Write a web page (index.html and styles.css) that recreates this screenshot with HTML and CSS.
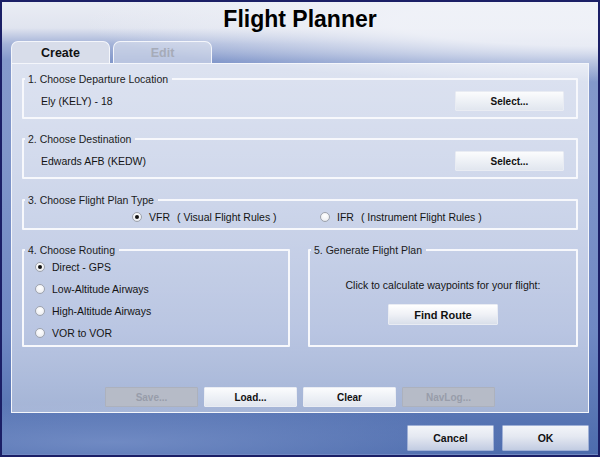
FILE: index.html
```html
<!DOCTYPE html>
<html lang="en">
<head>
  <meta charset="UTF-8">
  <meta name="viewport" content="width=device-width, initial-scale=1.0">
  <title>Flight Planner</title>
  <link rel="stylesheet" href="styles.css">
</head>
<body>
  <div class="window">
    <h1 class="title">Flight Planner</h1>
    <div class="tabs">
      <div class="tab active">Create</div>
      <div class="tab disabled">Edit</div>
    </div>
    <div class="panel">
      <fieldset class="group">
        <legend>1. Choose Departure Location</legend>
        <div class="row">
          <span class="value">Ely (KELY) - 18</span>
          <button class="btn">Select...</button>
        </div>
      </fieldset>
      <fieldset class="group">
        <legend>2. Choose Destination</legend>
        <div class="row">
          <span class="value">Edwards AFB (KEDW)</span>
          <button class="btn">Select...</button>
        </div>
      </fieldset>
      <fieldset class="group type">
        <legend>3. Choose Flight Plan Type</legend>
        <div class="types">
          <label class="radio checked"><span class="dot"></span>VFR<span class="hint">( Visual Flight Rules )</span></label>
          <label class="radio"><span class="dot"></span>IFR<span class="hint">( Instrument Flight Rules )</span></label>
        </div>
      </fieldset>
      <div class="split">
        <fieldset class="group routing">
          <legend>4. Choose Routing</legend>
          <label class="radio checked"><span class="dot"></span>Direct - GPS</label>
          <label class="radio"><span class="dot"></span>Low-Altitude Airways</label>
          <label class="radio"><span class="dot"></span>High-Altitude Airways</label>
          <label class="radio"><span class="dot"></span>VOR to VOR</label>
        </fieldset>
        <fieldset class="group generate">
          <legend>5. Generate Flight Plan</legend>
          <p>Click to calculate waypoints for your flight:</p>
          <button class="btn find">Find Route</button>
        </fieldset>
      </div>
      <div class="actions">
        <button class="btn wide" disabled>Save...</button>
        <button class="btn wide">Load...</button>
        <button class="btn wide">Clear</button>
        <button class="btn wide" disabled>NavLog...</button>
      </div>
    </div>
    <div class="footer">
      <button class="btn big">Cancel</button>
      <button class="btn big">OK</button>
    </div>
  </div>
</body>
</html>
```

FILE: styles.css
```css
html, body {
  margin: 0;
  padding: 0;
  overflow: hidden;
  background-color: #1b1f66;
}
.window {
  box-sizing: border-box;
  width: 600px;
  height: 457px;
  padding: 0 9px;
  border: 2px solid #1b1f66;
  box-shadow: inset 0 -1px 0 #7088c2;
  font-family: "Liberation Sans", Arial, sans-serif;
  font-size: 10.5px;
  color: #141414;
  background:
    radial-gradient(ellipse 420px 40px at 110px 440px, rgba(120,145,200,.8) 0, rgba(120,145,200,0) 100%),
    radial-gradient(ellipse 520px 60px at 600px 20px, rgba(240,242,248,.9) 40%, rgba(240,242,248,0) 100%),
    linear-gradient(180deg, #eaedf4 0, #e0e4ef 26px, #a4b3d8 42px, #8499cb 58px, #8096ca 150px, #6f88c3 330px, #5a77b5 405px, #4d6cad 450px);
}
.title {
  margin: 0;
  padding-bottom: 5px;
  height: 34px;
  line-height: 34px;
  text-align: center;
  font-size: 23px;
  font-weight: bold;
  color: #000;
}
.tabs {
  display: flex;
  gap: 3px;
  height: 22px;
}
.tab {
  box-sizing: border-box;
  width: 99px;
  border: 1.5px solid #f4f6fb;
  border-bottom: none;
  border-radius: 7px 7px 0 0;
  text-align: center;
  line-height: 22px;
  font-size: 12.5px;
  font-weight: bold;
}
.tab.active {
  background: #d8ddea;
  color: #111;
}
.tab.disabled {
  color: #a6abb8;
  background: rgba(222,227,239,.6);
}
.panel {
  height: 350px;
  box-sizing: border-box;
  padding: 9px 10px 5px;
  border: 1px solid #f4f6fb;
  background: linear-gradient(180deg, rgba(255,255,255,.72) 0, rgba(255,255,255,.62) 40%, rgba(255,255,255,.45) 100%);
}
.group {
  margin: 0 0 14px;
  padding: 6px 12px 6px 0;
  min-width: 0;
  border: 2px solid #f7f8fc;
  border-radius: 1px;
}
.group legend {
  margin-left: 1px;
  padding: 0 4px 0 3px;
  line-height: 12px;
  color: #1c1c1c;
}
.group + .group {
  margin-bottom: 15px;
}
.row {
  display: flex;
  align-items: center;
  justify-content: space-between;
  height: 20px;
  padding-left: 17px;
}
.btn {
  font-family: inherit;
  font-size: 10px;
  font-weight: bold;
  color: #111;
  border: 1px solid #e9ecf3;
  border-radius: 1px;
  background: linear-gradient(180deg, #fbfcfd 0, #eef1f6 50%, #e1e6ef 100%);
  padding: 0;
  cursor: pointer;
}
.row .btn {
  width: 109px;
  height: 20px;
}
.group.type {
  padding: 2px 0;
  margin-bottom: 14px;
}
.types {
  display: grid;
  grid-template-columns: 188px auto;
  padding-left: 108px;
  height: 18px;
}
.radio {
  display: flex;
  align-items: center;
  gap: 6px;
}
.radio .dot {
  box-sizing: border-box;
  width: 10px;
  height: 10px;
  border-radius: 50%;
  border: 1px solid #9ea3ad;
  background: radial-gradient(circle at 50% 35%, #fff 0, #f1f2f5 60%, #d9dce3 100%);
  display: grid;
  place-items: center;
  margin-right: 1px;
}
.radio.checked .dot::after {
  content: "";
  width: 4px;
  height: 4px;
  border-radius: 50%;
  background: #111;
}
.radio .hint {
  margin-left: 1px;
}
.split {
  display: grid;
  grid-template-columns: 268px 270px;
  gap: 18px;
}
.split .group {
  margin: 0;
}
.group.routing {
  padding: 0 8px 1px 0;
}
.routing .radio {
  height: 22px;
  padding-left: 11px;
}
.group.generate {
  padding: 23px 0 0;
  display: flex;
  flex-direction: column;
  align-items: center;
}
.generate p {
  margin: 0;
  line-height: 12px;
}
.btn.find {
  margin-top: 13px;
  width: 110px;
  height: 21px;
  font-size: 11px;
  background: linear-gradient(180deg, #ffffff 0, #eff1f6 50%, #d9dfea 100%);
}
.actions {
  display: flex;
  justify-content: center;
  gap: 6px;
  margin-top: 40px;
}
.btn.wide {
  width: 93px;
  height: 20px;
}
.btn:disabled {
  color: #989daa;
  border-color: #acb1bd;
  background: #b6bbc7;
  cursor: default;
}
.footer {
  display: flex;
  justify-content: flex-end;
  gap: 8px;
  margin-top: 12px;
}
.btn.big {
  width: 87px;
  height: 26px;
  font-size: 10.5px;
  border-color: #9fb0d6;
  background: linear-gradient(180deg, #f3f5f9 0, #e4e8f1 45%, #c2cce2 100%);
}
```
